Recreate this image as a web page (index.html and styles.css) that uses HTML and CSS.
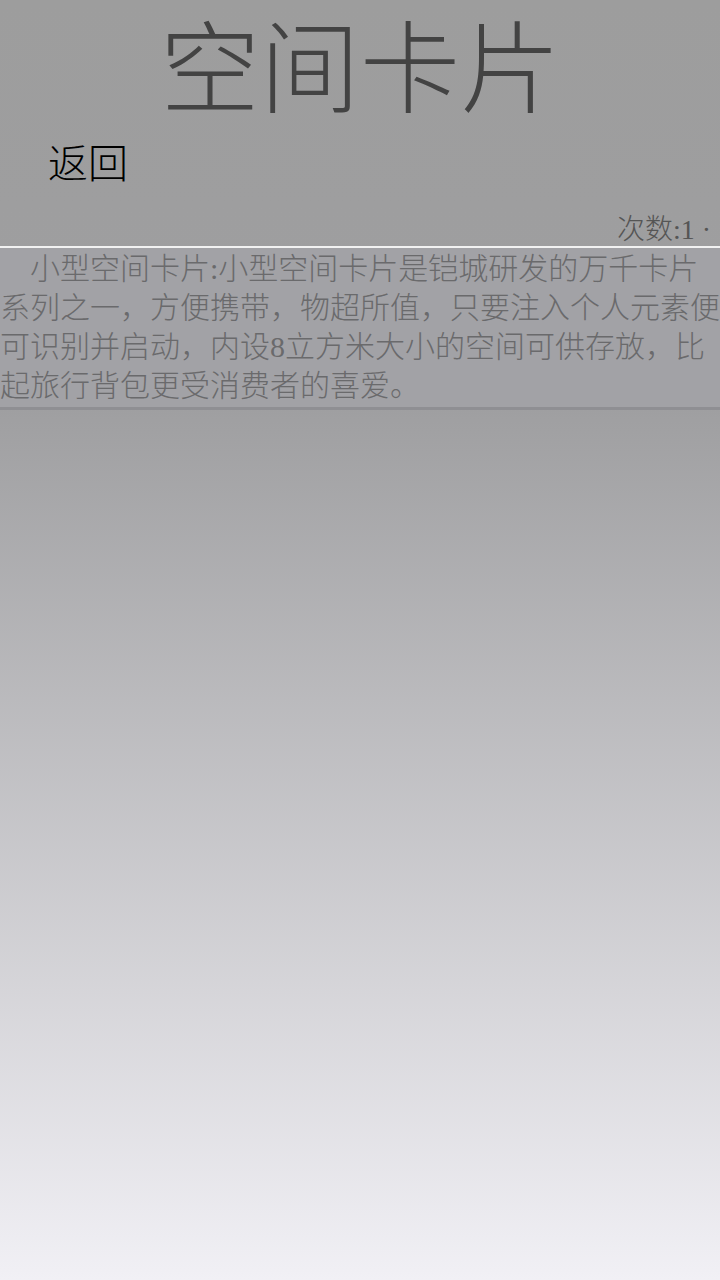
FILE: index.html
```html
<!DOCTYPE html>
<html lang="zh-CN">
<head>
<meta charset="utf-8">
<title>空间卡片</title>
<link rel="stylesheet" href="styles.css">
</head>
<body>
<div class="page">
  <header class="header">
    <h1 class="title">空间卡片</h1>
    <div class="back">返回</div>
    <div class="count">次数:1 ·</div>
  </header>
  <section class="desc">
    <p class="desc-text">小型空间卡片:小型空间卡片是铠城研发的万千卡片系列之一，方便携带，物超所值，只要注入个人元素便可识别并启动，内设8立方米大小的空间可供存放，比起旅行背包更受消费者的喜爱。</p>
  </section>
</div>
</body>
</html>
```

FILE: styles.css
```css
html, body {
  margin: 0;
  padding: 0;
}
body {
  width: 720px;
  min-height: 1280px;
  background: linear-gradient(to bottom, #9d9d9d 0px, #9f9fa1 410px, #f1f0f5 1280px);
  font-family: "Noto Sans CJK SC", "Noto Sans", sans-serif;
}
.page {
  display: flex;
  flex-direction: column;
}
.header {
  display: flex;
  flex-direction: column;
  border-bottom: 2px solid #f2f2f2;
}
.title {
  margin: 0;
  height: 124px;
  line-height: 124px;
  font-size: 100px;
  font-weight: 300;
  text-align: center;
  color: #434343;
}
.back {
  margin-top: 9px;
  height: 56px;
  line-height: 56px;
  font-size: 40px;
  padding-left: 48px;
  color: #000;
  font-weight: 300;
}
.count {
  padding-top: 25px;
  height: 32px;
  line-height: 32px;
  font-size: 28px;
  text-align: right;
  padding-right: 9px;
  color: #555;
  font-weight: 300;
  font-family: "Liberation Serif", "Noto Sans CJK SC", serif;
}
.desc {
  background: #a2a2a6;
  border-bottom: 3px solid #8f8f93;
  padding: 1px 0 2px;
}
.desc-text {
  margin: 0;
  font-size: 30px;
  line-height: 39px;
  text-indent: 30px;
  color: #6a6a6c;
  font-weight: 300;
  font-family: "Liberation Serif", "Noto Sans CJK SC", serif;
}
```
